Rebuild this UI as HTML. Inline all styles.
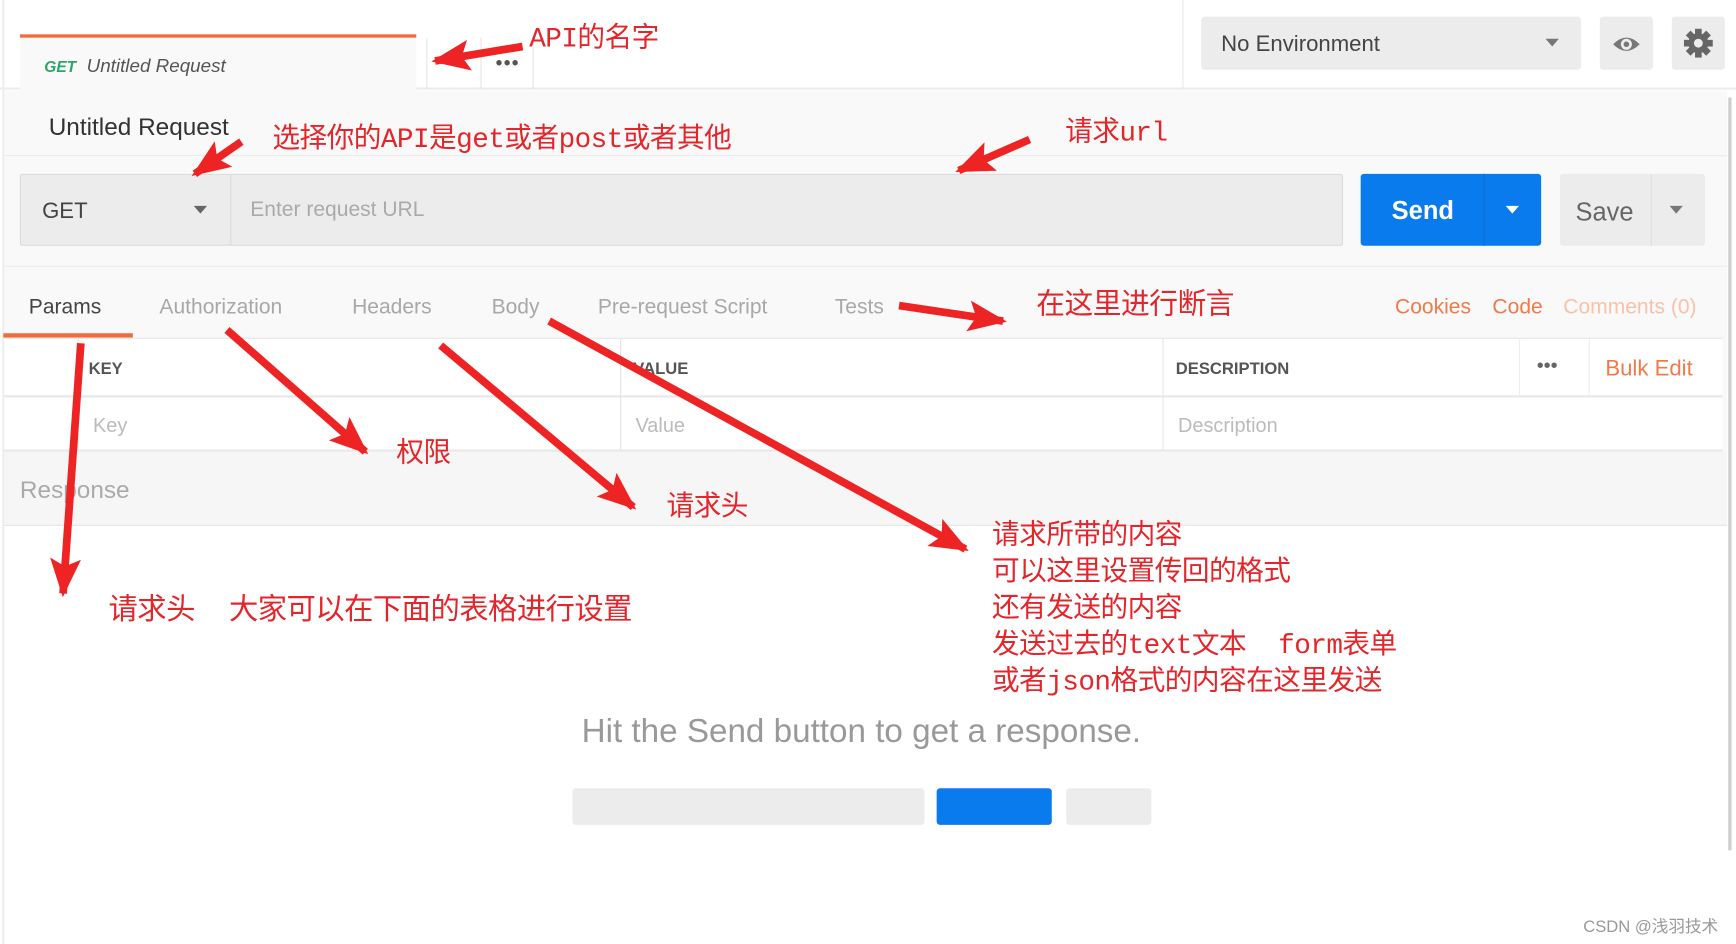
<!DOCTYPE html>
<html><head><meta charset="utf-8">
<style>
*{margin:0;padding:0;box-sizing:border-box}
html,body{width:1736px;height:944px;overflow:hidden;background:#fff}
#s{position:absolute;left:0;top:0;width:1568px;height:853px;transform:scale(1.10714);transform-origin:0 0;font-family:"Liberation Sans",sans-serif;background:#fff}
.a{position:absolute}
.red{position:absolute;color:#e3262b;font-family:"Liberation Mono","Noto Sans CJK SC",monospace;font-size:25px;line-height:33px;white-space:nowrap;letter-spacing:-0.5px}
.tab{position:absolute;top:267px;font-size:19px;color:#a8a8a8}
</style></head><body><div id="s">
<div class="a" style="left:0;top:0;width:1568px;height:81px;background:#fff;border-bottom:2px solid #ececec"></div>
<div class="a" style="left:2px;top:0;width:2px;height:853px;background:#eee"></div>
<div class="a" style="left:18px;top:31px;width:358px;height:51px;background:#f9f9f9;border-top:3px solid #f26b3a"></div>
<div class="a" style="left:40px;top:50px;font-size:17px;font-style:italic;color:#555"><b style="color:#27a86a;font-size:14px">GET</b> &nbsp;Untitled Request</div>
<div class="a" style="left:385px;top:34px;width:50px;height:46px;border-left:1px solid #e5e5e5;border-right:1px solid #e5e5e5"></div>
<div class="a" style="left:436px;top:34px;width:46px;height:46px;border-right:1px solid #e5e5e5;text-align:center;font-size:18px;color:#555;line-height:46px;letter-spacing:1px">•••</div>
<div class="a" style="left:1068px;top:0;width:1px;height:80px;background:#e8e8e8"></div>
<div class="a" style="left:1085px;top:15px;width:343px;height:48px;background:#ececec;border-radius:3px"></div>
<div class="a" style="left:1103px;top:29px;font-size:20px;color:#444">No Environment</div>
<div class="a" style="left:1396px;top:35px;border:6px solid transparent;border-top:7px solid #777"></div>
<div class="a" style="left:1445px;top:15px;width:48px;height:48px;background:#ececec;border-radius:3px"></div>
<svg class="a" style="left:1455px;top:29px" width="28" height="22" viewBox="0 0 28 22"><path d="M2 11 Q14 -1 26 11 Q14 23 2 11Z" fill="#777"/><circle cx="14" cy="11" r="5" fill="#ececec"/><circle cx="14" cy="11" r="2.5" fill="#777"/></svg>
<div class="a" style="left:1510px;top:15px;width:48px;height:48px;background:#ececec;border-radius:3px"></div>
<svg class="a" style="left:1520px;top:25px" width="28" height="28" viewBox="0 0 28 28"><g fill="#666"><circle cx="14" cy="14" r="9"/><rect x="11" y="1" width="6" height="26"/><rect x="1" y="11" width="26" height="6"/><rect x="11" y="1" width="6" height="26" transform="rotate(45 14 14)"/><rect x="11" y="1" width="6" height="26" transform="rotate(-45 14 14)"/></g><circle cx="14" cy="14" r="4" fill="#ececec"/></svg>
<div class="a" style="left:4px;top:82px;width:1556px;height:326px;background:#f9f9f9"></div>
<div class="a" style="left:1561px;top:88px;width:3px;height:680px;background:#cfcfcf"></div>
<div class="a" style="left:44px;top:102px;font-size:22px;color:#333">Untitled Request</div>
<div class="a" style="left:4px;top:140px;width:1556px;height:1px;background:#ececec"></div>
<div class="a" style="left:18px;top:157px;width:1195px;height:65px;background:#ececec;border:1px solid #dadada;border-radius:2px"></div>
<div class="a" style="left:208px;top:157px;width:1px;height:65px;background:#dcdcdc"></div>
<div class="a" style="left:38px;top:180px;font-size:20px;color:#444">GET</div>
<div class="a" style="left:175px;top:186px;border:6px solid transparent;border-top:7px solid #666"></div>
<div class="a" style="left:226px;top:179px;font-size:19px;color:#aaa">Enter request URL</div>
<div class="a" style="left:1229px;top:157px;width:163px;height:65px;background:#097bed;border-radius:3px"></div>
<div class="a" style="left:1340px;top:157px;width:1px;height:65px;background:#0a6fd4"></div>
<div class="a" style="left:1257px;top:177px;font-size:23px;color:#fff;font-weight:bold">Send</div>
<div class="a" style="left:1360px;top:186px;border:6px solid transparent;border-top:7px solid #fff"></div>
<div class="a" style="left:1409px;top:157px;width:131px;height:65px;background:#ececec;border-radius:3px"></div>
<div class="a" style="left:1491px;top:157px;width:1px;height:65px;background:#ddd"></div>
<div class="a" style="left:1423px;top:178px;font-size:23px;color:#666">Save</div>
<div class="a" style="left:1508px;top:186px;border:6px solid transparent;border-top:7px solid #777"></div>
<div class="a" style="left:4px;top:240px;width:1556px;height:1px;background:#ececec"></div>
<div class="tab" style="left:26px;color:#444">Params</div>
<div class="tab" style="left:144px">Authorization</div>
<div class="tab" style="left:318px">Headers</div>
<div class="tab" style="left:444px">Body</div>
<div class="tab" style="left:540px">Pre-request Script</div>
<div class="tab" style="left:754px">Tests</div>
<div class="tab" style="left:1260px;color:#f07a4a">Cookies</div>
<div class="tab" style="left:1348px;color:#f07a4a">Code</div>
<div class="tab" style="left:1412px;color:#f7c2a8">Comments (0)</div>
<div class="a" style="left:3px;top:301px;width:117px;height:4px;background:#f26b3a"></div>
<div class="a" style="left:4px;top:305px;width:1552px;height:103px;background:#fff;border-top:1px solid #e5e5e5"></div>
<div class="a" style="left:4px;top:357px;width:1552px;height:2px;background:#e8e8e8"></div>
<div class="a" style="left:4px;top:406px;width:1552px;height:2px;background:#e8e8e8"></div>
<div class="a" style="left:70px;top:306px;width:1px;height:100px;background:#e5e5e5"></div>
<div class="a" style="left:560px;top:306px;width:1px;height:100px;background:#e5e5e5"></div>
<div class="a" style="left:1050px;top:306px;width:1px;height:100px;background:#e5e5e5"></div>
<div class="a" style="left:1372px;top:306px;width:1px;height:52px;background:#eee"></div>
<div class="a" style="left:1435px;top:306px;width:1px;height:52px;background:#eee"></div>
<div class="a" style="left:80px;top:325px;font-size:15px;font-weight:bold;color:#555">KEY</div>
<div class="a" style="left:572px;top:325px;font-size:15px;font-weight:bold;color:#555">VALUE</div>
<div class="a" style="left:1062px;top:325px;font-size:15px;font-weight:bold;color:#555">DESCRIPTION</div>
<div class="a" style="left:1388px;top:320px;font-size:18px;color:#666">•••</div>
<div class="a" style="left:1450px;top:322px;font-size:20px;color:#f07a4a">Bulk Edit</div>
<div class="a" style="left:84px;top:374px;font-size:18px;color:#bbb">Key</div>
<div class="a" style="left:574px;top:374px;font-size:18px;color:#bbb">Value</div>
<div class="a" style="left:1064px;top:374px;font-size:18px;color:#bbb">Description</div>
<div class="a" style="left:4px;top:408px;width:1556px;height:67px;background:#f6f6f6;border-bottom:1px solid #e5e5e5"></div>
<div class="a" style="left:18px;top:430px;font-size:22px;color:#aaa">Response</div>
<div class="a" style="left:0;top:644px;width:1556px;text-align:center;font-size:30px;color:#999">Hit the Send button to get a response.</div>
<div class="a" style="left:517px;top:712px;width:318px;height:33px;background:#ececec;border-radius:3px"></div>
<div class="a" style="left:846px;top:712px;width:104px;height:33px;background:#097bed;border-radius:3px"></div>
<div class="a" style="left:963px;top:712px;width:77px;height:33px;background:#ececec;border-radius:3px"></div>
<div class="a" style="left:1430px;top:826px;font-size:15px;color:#999;font-family:'Liberation Sans','Noto Sans CJK SC',sans-serif">CSDN @浅羽技术</div>
<div class="red" style="left:478px;top:19px">API的名字</div>
<div class="red" style="left:246px;top:110px">选择你的API是get或者post或者其他</div>
<div class="red" style="left:962px;top:104px">请求url</div>
<div class="red" style="left:936px;top:260px;font-size:26px">在这里进行断言</div>
<div class="red" style="left:358px;top:394px">权限</div>
<div class="red" style="left:602px;top:442px">请求头</div>
<div class="red" style="left:98px;top:536px;font-size:26.5px">请求头 &nbsp;大家可以在下面的表格进行设置</div>
<div class="red" style="left:896px;top:468px">请求所带的内容<br>可以这里设置传回的格式<br>还有发送的内容<br>发送过去的text文本 &nbsp;form表单<br>或者json格式的内容在这里发送</div>
<svg class="a" style="left:0;top:0" width="1568" height="853">
<defs><marker id="h" markerWidth="5" markerHeight="4" refX="4.5" refY="2" orient="auto" markerUnits="strokeWidth"><path d="M0 0 L5 2 L0 4 L1 2Z" fill="#ee2424"/></marker></defs>
<g stroke="#ee2424" stroke-width="7" fill="none" marker-end="url(#h)">
<line x1="472" y1="42" x2="393" y2="55"/>
<line x1="218" y1="128" x2="176" y2="157"/>
<line x1="930" y1="126" x2="866" y2="154"/>
<line x1="812" y1="276" x2="906" y2="290"/>
<line x1="205" y1="298" x2="330" y2="408"/>
<line x1="398" y1="312" x2="572" y2="458"/>
<line x1="496" y1="290" x2="872" y2="496"/>
<line x1="73" y1="310" x2="57" y2="536"/>
</g></svg>
</div></body></html>
